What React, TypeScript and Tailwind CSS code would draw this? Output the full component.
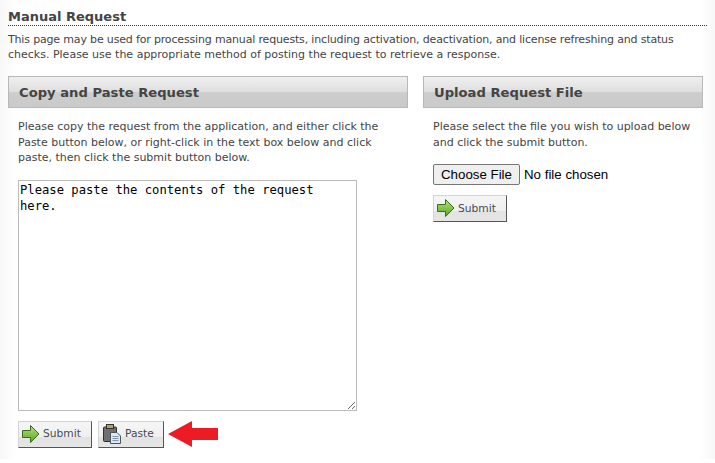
const font = "font-['Verdana','DejaVu_Sans',sans-serif]";

function ArrowIcon() {
  return (
    <svg width="18" height="18" viewBox="0 0 18 18" className="shrink-0">
      <defs>
        <linearGradient id="go" x1="0" y1="0" x2="0" y2="1">
          <stop offset="0" stopColor="#b9e07c" />
          <stop offset="1" stopColor="#52a823" />
        </linearGradient>
      </defs>
      <path d="M0.5 5.5 H8.5 V0.5 L17 9 L8.5 17.5 V12.5 H0.5 Z" fill="url(#go)" stroke="#3c6a1e" strokeWidth="1" />
    </svg>
  );
}

function PasteIcon() {
  return (
    <svg width="18" height="20" viewBox="0 0 18 20" className="shrink-0">
      <rect x="0.5" y="3" width="13" height="14.5" rx="1" fill="#6f6f6f" stroke="#2f2f2f" />
      <rect x="3.5" y="0.5" width="7" height="4" fill="#b7a44e" stroke="#333" />
      <path d="M7.5 8.5 H14 L17.5 12 V19.5 H7.5 Z" fill="#dfe7ef" stroke="#4a5560" />
      <path d="M9.5 12.5 H15.5 M9.5 14.5 H15.5 M9.5 16.5 H15.5" stroke="#7f97ad" />
    </svg>
  );
}

function ActionButton({ label, icon, className }: { label: string; icon: React.ReactNode; className: string }) {
  return (
    <button
      className={`flex h-[27px] items-center border border-[#d4d4d4] border-r-[#555] border-b-[#555] bg-[linear-gradient(#f6f6f6_0%,#efefef_58%,#e2e2e2_60%,#e6e6e6_100%)] pb-[1px] text-[10.7px] text-[#444a55] ${className}`}
    >
      {icon}
      {label}
    </button>
  );
}

function PanelHeader({ title }: { title: string }) {
  return (
    <h2 className="flex h-[32px] items-center border border-[#b8b8b8] bg-[linear-gradient(#efefef_0%,#dedede_50%,#cdcdcd_52%,#cacaca_100%)] pl-[10px] text-[13.15px] font-bold text-[#444]">
      {title}
    </h2>
  );
}

export default function App() {
  return (
    <div className="h-[463px] w-[715px] overflow-hidden bg-white">
      <div className={`h-[459px] bg-[linear-gradient(90deg,#f7f7f7,#ffffff_15px,#ffffff_700px,#f7f7f7)] px-2 pt-[9px] ${font} text-[11px] leading-[15px] text-[#444]`}>
        <h1 className="h-[17px] border-b border-dotted border-[#333] text-[13px] leading-[15px] font-bold text-[#444]">
          Manual Request
        </h1>
        <p className="mt-[6px] w-[690px] first-line:tracking-[-0.165px]">
          This page may be used for processing manual requests, including activation, deactivation, and license refreshing and status checks. Please use the appropriate method of posting the request to retrieve a response.
        </p>

        <div className="mt-[14px] flex gap-[15px]">
          <section className="w-[400px]">
            <PanelHeader title="Copy and Paste Request" />
            <div className="pl-[10px]">
              <p className="mt-[11px] w-[375px] leading-[15.5px]">
                Please copy the request from the application, and either click the Paste button below, or right-click in the text box below and click paste, then click the submit button below.
              </p>
              <textarea
                className="mt-[14px] block h-[231px] w-[339px] border border-[#bbb] bg-white px-[1px] py-[1px] font-['DejaVu_Sans_Mono',monospace] text-[12.2px] leading-[16px] text-black"
                defaultValue="Please paste the contents of the request here."
              />
              <div className="mt-[10px] flex gap-[6px]">
                <ActionButton label="Submit" icon={<ArrowIcon />} className="w-[74px] gap-[3px] pl-[3px]" />
                <div className="flex items-center gap-[4px]">
                  <ActionButton label="Paste" icon={<PasteIcon />} className="w-[66px] gap-[4px] pl-[4px]" />
                  <svg width="50" height="26" viewBox="0 0 50 26" className="shrink-0">
                    <path d="M0 13 L24 0 V7 H50 V19 H24 V26 Z" fill="#ed1c24" />
                  </svg>
                </div>
              </div>
            </div>
          </section>

          <section className="w-[280px]">
            <PanelHeader title="Upload Request File" />
            <div className="pl-[10px]">
              <p className="mt-[11px] w-[265px] leading-[15.5px]">
                Please select the file you wish to upload below and click the submit button.
              </p>
              <div className="mt-[14px] flex h-[21px] items-center font-['Liberation_Sans',Arial,sans-serif] text-[13.3px] text-black">
                <button className="h-[21px] w-[87px] rounded-[2px] border border-[#767676] bg-[#efefef]">Choose File</button>
                <span className="ml-[4px]">No file chosen</span>
              </div>
              <div className="mt-[10px]">
                <ActionButton label="Submit" icon={<ArrowIcon />} className="w-[74px] gap-[3px] pl-[3px]" />
              </div>
            </div>
          </section>
        </div>
      </div>
    </div>
  );
}
